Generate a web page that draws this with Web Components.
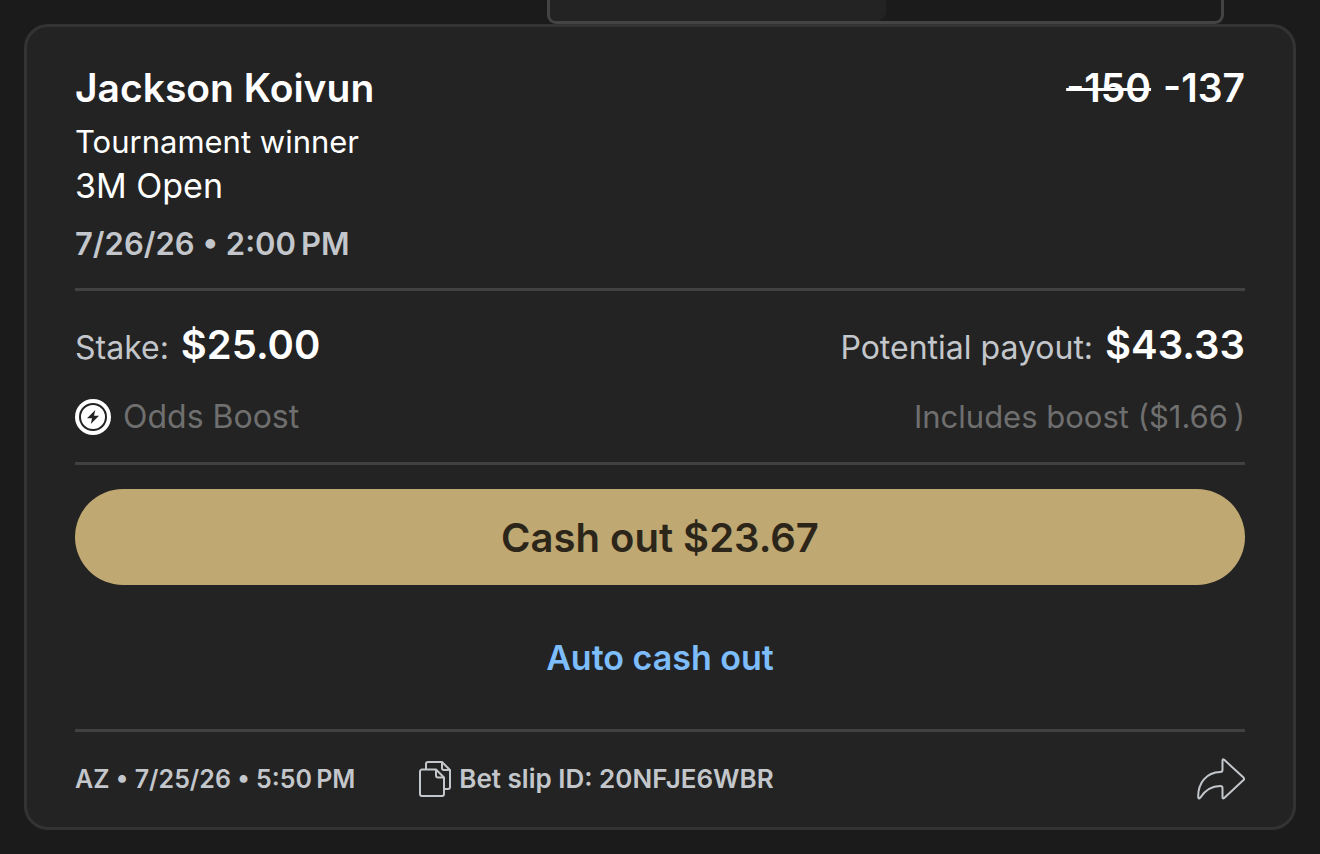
<!DOCTYPE html>
<html lang="en">
<head>
<meta charset="utf-8">
<meta name="viewport" content="width=device-width, initial-scale=1">
<title>My bets</title>
<style>
  :root {
    --page: #1b1b1b;
    --card: #232323;
    --card-border: #333333;
    --line: #414141;
    --text: #ffffff;
    --text-soft: #c3c7cb;
    --text-dim: #6f6f6f;
    --gold: #bfa871;
    --link: #7dbdfb;
  }

  body {
    margin: 0;
    background: var(--page);
    color: var(--text);
    font-family: Inter, "Liberation Sans", sans-serif;
  }
</style>
</head>
<body>
<bet-filter></bet-filter>
<bet-card>
  <bet-selection slot="selection">
    <span slot="name">Jackson Koivun</span>
    <s slot="odds">-150</s>
    <span slot="odds">-137</span>
    <span slot="market">Tournament winner</span>
    <span slot="event">3M Open</span>
    <time slot="time" datetime="2026-07-26T14:00">7/26/26 • 2:00&#8239;PM</time>
  </bet-selection>
  <bet-stake slot="stake">
    <span slot="stake">$25.00</span>
    <span slot="payout">$43.33</span>
    <span slot="boost">Includes boost ($1.66&#8239;)</span>
  </bet-stake>
  <cash-out slot="actions">$23.67</cash-out>
  <bet-footer slot="footer">
    <span slot="placed">AZ • 7/25/26 • 5:50&#8239;PM</span>
    <span slot="slip">20NFJE6WBR</span>
  </bet-footer>
</bet-card>

<script>
class BaseElement extends HTMLElement {
  connectedCallback() {
    if (this.shadowRoot) return
    this.attachShadow({ mode: 'open' })
    this.shadowRoot.innerHTML = this.constructor.template
  }
}

// bottom edge of the two-way filter, scrolled almost out of view
class BetFilter extends BaseElement {
  static template = `
<style>
  :host {
    display: flex;
    justify-content: flex-end;
    padding: 0 96px;
  }

  .track {
    box-sizing: border-box;
    display: flex;
    width: 60%;
    height: 24px;
    border: 3px solid #444;
    border-top: none;
    border-radius: 0 0 9px 9px;
  }

  .thumb {
    width: 50%;
    background: var(--card);
    border-radius: 0 0 9px 6px;
  }
</style>

<div class="track"><div class="thumb"></div></div>
`
}

class BetCard extends BaseElement {
  static template = `
<style>
  :host {
    display: block;
    margin: 0 24px 24px;
    padding: 36px 48px 24px;
    background: var(--card);
    border: 3px solid var(--card-border);
    border-radius: 24px;
  }

  hr {
    height: 3px;
    margin: 0;
    border: none;
    background: var(--line);
  }
</style>

<slot name="selection"></slot>
<hr>
<slot name="stake"></slot>
<hr>
<slot name="actions"></slot>
<hr>
<slot name="footer"></slot>
`
}

class BetSelection extends BaseElement {
  static template = `
<style>
  :host {
    display: block;
    padding-bottom: 20px;
  }

  header {
    display: flex;
    justify-content: space-between;
    gap: 24px;
    margin-bottom: 7px;
    font-size: 39px;
    line-height: 50px;
    font-weight: 600;
  }

  h2 {
    margin: 0;
    font: inherit;
  }

  .odds {
    display: flex;
    gap: 12px;
  }

  ::slotted(s) {
    text-decoration-thickness: 3px;
  }

  p {
    margin: 0;
    font-size: 31px;
    line-height: 44px;
  }

  .event {
    font-size: 34px;
  }

  .time {
    margin-top: 12px;
    line-height: 48px;
    font-weight: 600;
    color: var(--text-soft);
  }
</style>

<header>
  <h2><slot name="name"></slot></h2>
  <div class="odds"><slot name="odds"></slot></div>
</header>
<p><slot name="market"></slot></p>
<p class="event"><slot name="event"></slot></p>
<p class="time"><slot name="time"></slot></p>
`
}

class BetStake extends BaseElement {
  static template = `
<style>
  :host {
    display: block;
    padding: 30px 0 21px;
    font-size: 32px;
  }

  .row {
    display: flex;
    align-items: center;
    justify-content: space-between;
    gap: 24px;
    line-height: 48px;
  }

  .row + .row {
    margin-top: 21px;
    color: var(--text-dim);
  }

  .amount {
    display: flex;
    align-items: baseline;
    gap: 12px;
    color: var(--text-soft);
  }

  .amount b {
    font-size: 40px;
    font-weight: 600;
    color: var(--text);
  }

  .boost {
    display: flex;
    align-items: center;
    gap: 12px;
  }

  ::slotted([slot="boost"]) {
    font-size: 31px;
  }

  svg {
    width: 36px;
    height: 36px;
  }
</style>

<div class="row">
  <div class="amount">Stake: <b><slot name="stake"></slot></b></div>
  <div class="amount">Potential payout: <b><slot name="payout"></slot></b></div>
</div>
<div class="row">
  <div class="boost">
    <svg viewBox="0 0 36 36" aria-hidden="true">
      <circle cx="18" cy="18" r="18" fill="#fff"/>
      <circle cx="18" cy="18" r="13" fill="none" stroke="#232323" stroke-width="2"/>
      <path fill="#232323" d="M20.300 11 12 19.200h5l-1.200 5.800 8.200-8.300h-5z"/>
    </svg>
    <span>Odds Boost</span>
  </div>
  <slot name="boost"></slot>
</div>
`
}

class CashOut extends BaseElement {
  static template = `
<style>
  :host {
    display: flex;
    flex-direction: column;
    align-items: stretch;
    gap: 24px;
    padding: 24px 0;
  }

  button {
    height: 96px;
    padding: 0 48px;
    border: none;
    border-radius: 48px;
    font-family: inherit;
    font-weight: 600;
    cursor: pointer;
  }

  .cash {
    font-size: 40px;
    color: #2c2519;
    background: var(--gold);
  }

  .auto {
    font-size: 34px;
    color: var(--link);
    background: none;
  }
</style>

<button class="cash" type="button">Cash out <slot></slot></button>
<button class="auto" type="button">Auto cash out</button>
`
}

class BetFooter extends BaseElement {
  static template = `
<style>
  :host {
    display: flex;
    align-items: center;
    padding-top: 23px;
    font-size: 26px;
    line-height: 48px;
    font-weight: 600;
    color: var(--text-soft);
  }

  ::slotted([slot="placed"]) {
    font-size: 25px;
  }

  button {
    display: flex;
    align-items: center;
    padding: 0;
    border: none;
    font: inherit;
    color: inherit;
    background: none;
    cursor: pointer;
  }

  svg {
    fill: none;
    stroke: currentColor;
    stroke-width: 2;
    stroke-linejoin: round;
  }

  .slip {
    gap: 8px;
    margin-left: 64px;
  }

  .slip svg {
    width: 32px;
    height: 36px;
  }

  .share {
    margin-left: auto;
  }

  .share svg {
    width: 48px;
    height: 42px;
  }
</style>

<slot name="placed"></slot>
<button class="slip" type="button">
  <svg viewBox="0 0 32 36" aria-hidden="true">
    <path d="M7 8V3a2 2 0 0 1 2-2h14l8 8v17a2 2 0 0 1-2 2h-4M23 1v6a2 2 0 0 0 2 2h6"/>
    <path d="M3 8.500h14l8 8V33a2 2 0 0 1-2 2H3a2 2 0 0 1-2-2V10.500a2 2 0 0 1 2-2zM17 8.500v6a2 2 0 0 0 2 2h6"/>
  </svg>
  <span>Bet slip ID: <slot name="slip"></slot></span>
</button>
<button class="share" type="button" aria-label="Share bet">
  <svg viewBox="0 0 48 42" aria-hidden="true">
    <path d="M25.500 2.500q0-2 1.700-.7l19.300 17.800q1.200 1.200 0 2.400L27.200 40q-1.700 1.200-1.700-.8v-9q0-2.200-2.200-2.200C14.500 28 8.500 31.500 3.200 39.800q-1.600 1.600-2-.4C.8 24.500 9.500 14.500 23.300 14q2.200 0 2.200-2.200z"/>
  </svg>
</button>
`
}

customElements.define('bet-filter', BetFilter)
customElements.define('bet-card', BetCard)
customElements.define('bet-selection', BetSelection)
customElements.define('bet-stake', BetStake)
customElements.define('cash-out', CashOut)
customElements.define('bet-footer', BetFooter)
</script>
</body>
</html>
